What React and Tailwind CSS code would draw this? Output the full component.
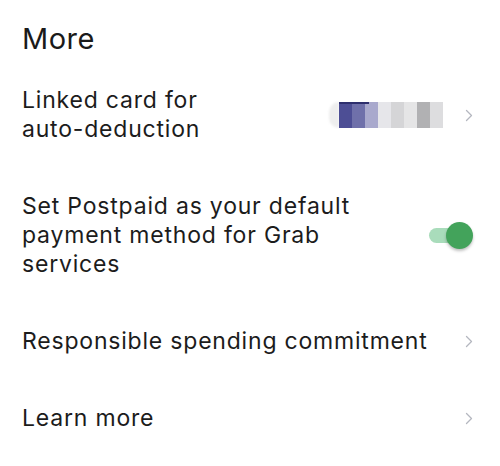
import React from "react";

const Chevron = () => (
  <svg width="8" height="13" viewBox="0 0 8 13" fill="none" className="shrink-0">
    <polyline
      points="1.5,1.5 6.5,6.5 1.5,11.5"
      stroke="#b4b7bf"
      strokeWidth="1.3"
      strokeLinecap="round"
      strokeLinejoin="round"
    />
  </svg>
);

const blocks = ["#4d4e95", "#6f70aa", "#a9a9cd", "#e6e6ea", "#d5d5d7", "#e5e5e6", "#b1b1b3", "#dddddf"];

const MaskedCard = () => (
  <div className="relative flex h-[26px] items-stretch">
    <div className="w-[10px] rounded-l-full bg-[#eeeeee] blur-[1px]" />
    {blocks.map((c, i) => (
      <div key={i} className="w-[13px] blur-[0.6px]" style={{ backgroundColor: c }} />
    ))}
    <div className="absolute left-[10px] top-0 h-[2px] w-[30px] bg-[#2e2f6e] blur-[0.5px]" />
  </div>
);

const Toggle = () => (
  <div className="relative h-[28px] w-[44px] shrink-0">
    <div className="absolute left-0 top-[6px] h-[15px] w-[37px] rounded-full bg-[#a9dcbb]" />
    <div className="absolute right-0 top-0 h-[27px] w-[27px] rounded-full bg-[#43a35b] shadow-[0_2px_3px_rgba(0,0,0,0.25)]" />
  </div>
);

const Row = ({ children, right }) => (
  <div className="flex items-center justify-between gap-4 py-6">
    <div className="text-[23px] leading-[29px] tracking-[0.8px] text-[#1c1c1c]">{children}</div>
    {right}
  </div>
);

export default function App() {
  return (
    <div
      className="min-h-[466px] w-[500px] bg-white pl-[22px] pr-[27px] pt-[22px]"
      style={{ fontFamily: "Inter, 'Noto Sans', sans-serif" }}
    >
      <h1 className="text-[29px] leading-[34px] tracking-[0.5px] text-[#1a1a1a]">More</h1>
      <div className="mt-[6px]">
        <Row
          right={
            <div className="flex items-center gap-[22px]">
              <MaskedCard />
              <Chevron />
            </div>
          }
        >
          Linked card for
          <br />
          auto-deduction
        </Row>
        <Row right={<Toggle />}>
          Set Postpaid as your default
          <br />
          payment method for Grab
          <br />
          services
        </Row>
        <Row right={<Chevron />}>Responsible spending commitment</Row>
        <Row right={<Chevron />}>Learn more</Row>
      </div>
    </div>
  );
}
